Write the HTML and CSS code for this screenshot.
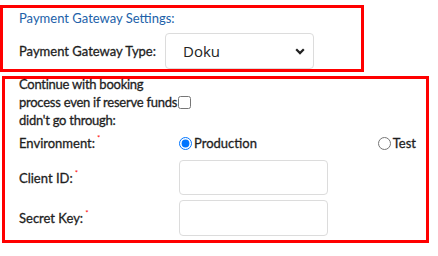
FILE: index.html
```html
<!DOCTYPE html>
<html lang="en">
<head>
    <meta charset="UTF-8">
    <title>Payment Gateway Settings</title>
    <link rel="stylesheet" href="styles.css">
</head>
<body>

    <!-- Gateway type -->
    <div class="box box-top">
        <h2 class="title">Payment Gateway Settings:</h2>
        <div class="row row-type">
            <label class="label" for="gateway">Payment Gateway Type:</label>
            <div class="select-wrap">
                <select id="gateway" class="select">
                    <option>Doku</option>
                </select>
                <svg class="chevron" width="10" height="7" viewBox="0 0 10 7">
                    <path d="M1.2 1.3 L5 5.1 L8.8 1.3" fill="none" stroke="#222" stroke-width="2.2"/>
                </svg>
            </div>
        </div>
    </div>

    <!-- Doku settings -->
    <div class="box box-bottom">
        <div class="row row-check">
            <label class="label" for="continue">Continue with booking<br>process even if reserve funds<br>didn't go through:</label>
            <input type="checkbox" id="continue" class="check">
        </div>
        <div class="row row-env">
            <span class="label">Environment:<sup class="req">*</sup></span>
            <div class="radios">
                <label class="radio"><input type="radio" name="env" checked>Production</label>
                <label class="radio"><input type="radio" name="env">Test</label>
            </div>
        </div>
        <div class="row row-client">
            <label class="label" for="client">Client ID:<sup class="req">*</sup></label>
            <input type="text" id="client" class="text">
        </div>
        <div class="row row-secret">
            <label class="label" for="secret">Secret Key:<sup class="req">*</sup></label>
            <input type="text" id="secret" class="text">
        </div>
    </div>

</body>
</html>
```

FILE: styles.css
```css
body {
    margin: 0;
    padding: 5px 0 0 0;
    font-family: 'Lato', 'Liberation Sans', sans-serif;
    color: #333;
    background: #fff;
}
.box {
    box-sizing: border-box;
    border: 3px solid #ff0000;
}
.box-top {
    width: 364px;
    height: 67px;
    margin-left: 0;
    padding: 1px 0 0 16px;
}
.box-bottom {
    width: 427px;
    height: 167px;
    margin: 4px 0 0 2px;
    padding: 0 0 0 14px;
}
.title {
    margin: 0;
    font-size: 13px;
    font-weight: normal;
    line-height: 18px;
    color: #2161a9;
}
.row {
    display: flex;
    align-items: center;
}
.label {
    width: 160px;
    flex: none;
    font-size: 13px;
    font-weight: normal;
    line-height: 18px;
    color: #1e1e1e;
    -webkit-text-stroke: 0.3px #1e1e1e;
}
.row-type {
    margin-top: 6px;
}
.row-type .label {
    width: 146px;
}
.select-wrap {
    position: relative;
}
.select {
    appearance: none;
    box-sizing: border-box;
    width: 149px;
    height: 36px;
    margin: 0;
    padding: 0 0 0 17px;
    border: 1px solid #dcdcdc;
    border-radius: 4px;
    background: #fff;
    font-family: 'Open Sans', 'Liberation Sans', sans-serif;
    font-size: 15px;
    color: #222;
}
.chevron {
    position: absolute;
    right: 9px;
    top: 15px;
}
.row-check {
    margin-top: -4px;
}
.row-check .label {
    width: auto;
    white-space: nowrap;
    letter-spacing: -0.25px;
}
.check {
    width: 13px;
    height: 13px;
    margin: 0 0 0 1px;
}
.row-env {
    margin-top: 5px;
    height: 18px;
}
.req {
    color: #ff0000;
    font-size: 8px;
    line-height: 0;
    margin-left: 2px;
    vertical-align: 7px;
    -webkit-text-stroke: 0;
}
.radios {
    display: flex;
    justify-content: space-between;
    width: 237px;
}
.radio {
    display: flex;
    align-items: center;
    font-size: 13px;
    font-weight: normal;
    color: #1e1e1e;
    -webkit-text-stroke: 0.3px #1e1e1e;
}
.radio input {
    width: 13px;
    height: 13px;
    margin: 0 2px 0 0;
}
.text {
    box-sizing: border-box;
    width: 149px;
    height: 35px;
    margin: 0;
    border: 1px solid #dcdcdc;
    border-radius: 4px;
}
.row-client {
    margin-top: 8px;
}
.row-secret {
    margin-top: 5px;
}
.row-secret .text {
    height: 36px;
}
```
